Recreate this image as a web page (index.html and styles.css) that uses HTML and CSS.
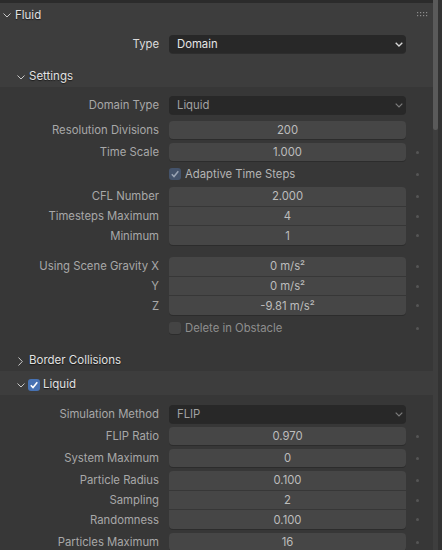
FILE: index.html
```html
<!DOCTYPE html>
<html>
<head>
<meta charset="utf-8">
<link rel="stylesheet" href="styles.css">
</head>
<body>
<div class="app">
  <div class="panel">
    <div class="topstrip"></div>
    <div class="hdr hdr-main">
      <svg class="chev" width="8" height="5" viewBox="0 0 8 5"><path d="M0.5 0.5 L4 4 L7.5 0.5" fill="none" stroke="#c8c8c8" stroke-width="1"/></svg>
      <span class="htitle">Fluid</span>
      <svg class="grip" width="12" height="5" viewBox="0 0 12 5">
        <rect x="0" y="0" width="1.2" height="1.2" fill="#8c8c8c"/><rect x="3" y="0" width="1.2" height="1.2" fill="#8c8c8c"/><rect x="6" y="0" width="1.2" height="1.2" fill="#8c8c8c"/><rect x="9" y="0" width="1.2" height="1.2" fill="#8c8c8c"/>
        <rect x="0" y="3" width="1.2" height="1.2" fill="#8c8c8c"/><rect x="3" y="3" width="1.2" height="1.2" fill="#8c8c8c"/><rect x="6" y="3" width="1.2" height="1.2" fill="#8c8c8c"/><rect x="9" y="3" width="1.2" height="1.2" fill="#8c8c8c"/>
      </svg>
    </div>
    <div class="body main-body">
      <div class="row">
        <div class="label bright">Type</div>
        <div class="menu"><span class="mtext bright">Domain</span><svg class="mchev" width="8" height="5" viewBox="0 0 8 5"><path d="M0.7 0.7 L4 4 L7.3 0.7" fill="none" stroke="#d8d8d8" stroke-width="1.3"/></svg></div>
        <div class="decor"></div>
      </div>
    </div>

    <div class="hdr hdr-sub">
      <svg class="chev" width="8" height="5" viewBox="0 0 8 5"><path d="M0.5 0.5 L4 4 L7.5 0.5" fill="none" stroke="#c8c8c8" stroke-width="1"/></svg>
      <span class="htitle">Settings</span>
    </div>
    <div class="body sub-body settings">
      <div class="row">
        <div class="label">Domain Type</div>
        <div class="menu"><span class="mtext">Liquid</span><svg class="mchev" width="8" height="5" viewBox="0 0 8 5"><path d="M0.7 0.7 L4 4 L7.3 0.7" fill="none" stroke="#7c7c7c" stroke-width="1.2"/></svg></div>
        <div class="decor"></div>
      </div>
      <div class="row m7">
        <div class="label">Resolution Divisions</div>
        <div class="num">200</div>
        <div class="decor"></div>
      </div>
      <div class="row m4">
        <div class="label">Time Scale</div>
        <div class="num">1.000</div>
        <div class="decor"><span class="dot"></span></div>
      </div>
      <div class="row m4">
        <div class="label"></div>
        <div class="check-row"><span class="cb cb-dim"><svg width="12" height="12" viewBox="0 0 12 12"><path d="M2.8 6.2 L5 8.5 L9.3 3.3" fill="none" stroke="#9aa4b4" stroke-width="1.5"/></svg></span><span class="ctext">Adaptive Time Steps</span></div>
        <div class="decor"><span class="dot"></span></div>
      </div>
      <div class="group m4">
        <div class="row grow">
          <div class="label">CFL Number</div>
          <div class="num g-first">2.000</div>
          <div class="decor"><span class="dot"></span></div>
        </div>
        <div class="row grow">
          <div class="label">Timesteps Maximum</div>
          <div class="num g-mid">4</div>
          <div class="decor"><span class="dot"></span></div>
        </div>
        <div class="row grow">
          <div class="label">Minimum</div>
          <div class="num g-last">1</div>
          <div class="decor"><span class="dot"></span></div>
        </div>
      </div>
      <div class="group m12">
        <div class="row grow">
          <div class="label">Using Scene Gravity X</div>
          <div class="num g-first">0 m/s²</div>
          <div class="decor"><span class="dot"></span></div>
        </div>
        <div class="row grow">
          <div class="label">Y</div>
          <div class="num g-mid">0 m/s²</div>
          <div class="decor"><span class="dot"></span></div>
        </div>
        <div class="row grow">
          <div class="label">Z</div>
          <div class="num g-last">-9.81 m/s²</div>
          <div class="decor"><span class="dot"></span></div>
        </div>
      </div>
      <div class="row m4">
        <div class="label"></div>
        <div class="check-row"><span class="cb cb-off"></span><span class="ctext dimmer">Delete in Obstacle</span></div>
        <div class="decor"><span class="dot"></span></div>
      </div>
    </div>

    <div class="hdr hdr-sub hdr-flat">
      <svg class="chev-r" width="5" height="9" viewBox="0 0 5 9"><path d="M0.5 0.5 L4.3 4.5 L0.5 8.5" fill="none" stroke="#c8c8c8" stroke-width="1"/></svg>
      <span class="htitle">Border Collisions</span>
    </div>
    <div class="hdr hdr-sub hdr-liquid">
      <svg class="chev" width="8" height="5" viewBox="0 0 8 5"><path d="M0.5 0.5 L4 4 L7.5 0.5" fill="none" stroke="#c8c8c8" stroke-width="1"/></svg>
      <span class="cb cb-on"><svg width="12" height="12" viewBox="0 0 12 12"><path d="M2.8 6.2 L5 8.5 L9.3 3.3" fill="none" stroke="#ffffff" stroke-width="1.6"/></svg></span>
      <span class="htitle">Liquid</span>
    </div>
    <div class="body sub-body liquid">
      <div class="row">
        <div class="label">Simulation Method</div>
        <div class="menu"><span class="mtext">FLIP</span><svg class="mchev" width="8" height="5" viewBox="0 0 8 5"><path d="M0.7 0.7 L4 4 L7.3 0.7" fill="none" stroke="#7c7c7c" stroke-width="1.2"/></svg></div>
        <div class="decor"></div>
      </div>
      <div class="row m4">
        <div class="label">FLIP Ratio</div>
        <div class="num">0.970</div>
        <div class="decor"><span class="dot"></span></div>
      </div>
      <div class="row m4">
        <div class="label">System Maximum</div>
        <div class="num">0</div>
        <div class="decor"><span class="dot"></span></div>
      </div>
      <div class="group m4">
        <div class="row grow">
          <div class="label">Particle Radius</div>
          <div class="num g-first">0.100</div>
          <div class="decor"><span class="dot"></span></div>
        </div>
        <div class="row grow">
          <div class="label">Sampling</div>
          <div class="num g-mid">2</div>
          <div class="decor"><span class="dot"></span></div>
        </div>
        <div class="row grow">
          <div class="label">Randomness</div>
          <div class="num g-last">0.100</div>
          <div class="decor"><span class="dot"></span></div>
        </div>
      </div>
      <div class="row m4">
        <div class="label">Particles Maximum</div>
        <div class="num">16</div>
        <div class="decor"><span class="dot"></span></div>
      </div>
    </div>
  </div>
  <div class="scroll">
    <div class="track"><div class="thumb"></div></div>
  </div>
</div>
</body>
</html>
```

FILE: styles.css
```css
* { box-sizing: border-box; }
html, body {
  margin: 0;
  padding: 0;
  background: #303030;
  width: 442px;
  height: 550px;
  overflow: hidden;
}
body {
  font-family: Inter, "Noto Sans", "DejaVu Sans", sans-serif;
  font-size: 11.3px;
  color: #a8a8a8;
}
.app {
  display: flex;
  width: 442px;
  height: 550px;
}
.panel {
  width: 433px;
  flex: none;
  background: #373737;
}
.topstrip {
  height: 3px;
  background: #2b2b2b;
}
.hdr {
  display: flex;
  align-items: center;
  background: #3d3d3d;
  color: #e2e2e2;
  text-shadow: 0 1px 1px rgba(0, 0, 0, 0.6);
}
.htitle { line-height: 1; }
.hdr-main {
  height: 23px;
  padding-left: 3px;
  padding-top: 2px;
  gap: 4px;
  font-size: 11.5px;
}
.hdr-main .grip {
  margin-left: auto;
  margin-right: 4px;
  margin-top: -2px;
}
.hdr-sub {
  height: 24px;
  padding-left: 17px;
  padding-top: 4px;
  gap: 4px;
  font-size: 11.5px;
}
.hdr-flat { background: #373737; }
.hdr-flat .chev-r { margin-left: 1px; margin-right: 2px; }
.hdr-liquid { gap: 3px; }

.body { display: flex; flex-direction: column; }
.main-body {
  background: #3d3d3d;
  padding: 9px 0 10px;
}
.sub-body { background: #373737; }
.settings { padding: 9px 0 10px; }
.liquid { padding: 10px 0 0; }

.row {
  display: grid;
  grid-template-columns: 159px 237px 1fr;
  column-gap: 10px;
  height: 18px;
  align-items: center;
}
.m4 { margin-top: 4px; }
.m7 { margin-top: 7px; }
.m12 { margin-top: 12px; }

.label {
  text-align: right;
  white-space: nowrap;
  color: #a8a8a8;
}
.label.bright { color: #dcdcdc; }

.menu {
  height: 18px;
  background: #282828;
  border-radius: 4px;
  display: flex;
  align-items: center;
  padding: 0 2px 0 8px;
  box-shadow: 0 1px 0 rgba(0, 0, 0, 0.25);
}
.mtext { color: #a2a2a2; }
.mtext.bright { color: #e6e6e6; }
.mchev { margin-left: auto; margin-right: 1px; }

.num {
  height: 18px;
  background: #464646;
  border-radius: 4px;
  display: flex;
  align-items: center;
  justify-content: center;
  color: #bdbdbd;
  box-shadow: 0 1px 0 rgba(0, 0, 0, 0.2);
}

.group {
  display: flex;
  flex-direction: column;
  gap: 1px;
  height: 58px;
}
.group .row.grow {
  height: auto;
  flex: 1;
  align-items: stretch;
}
.group .row.grow .label {
  display: flex;
  align-items: center;
  justify-content: flex-end;
}
.group .row.grow .decor { align-self: center; }
.group .num { height: auto; box-shadow: none; }
.num.g-first { border-radius: 4px 4px 0 0; }
.num.g-mid { border-radius: 0; }
.num.g-last { border-radius: 0 0 4px 4px; box-shadow: 0 1px 0 rgba(0, 0, 0, 0.2); }

.decor {
  display: flex;
  align-items: center;
  height: 18px;
}
.dot {
  width: 3px;
  height: 3px;
  border-radius: 50%;
  background: #555555;
}

.check-row {
  display: flex;
  align-items: center;
  gap: 4px;
  height: 18px;
}
.cb {
  width: 12px;
  height: 12px;
  border-radius: 3px;
  display: inline-flex;
  flex: none;
}
.cb-dim { background: #44536b; }
.cb-off { background: #444444; box-shadow: 0 1px 0 rgba(0, 0, 0, 0.2); }
.cb-on { background: #4772b3; }
.ctext { color: #b4b4b4; }
.ctext.dimmer { color: #8e8e8e; }

.scroll {
  flex: 1;
  background: #333333;
  display: flex;
}
.track {
  width: 5px;
  background: #3e3e3e;
  height: 550px;
}
.thumb {
  width: 5px;
  height: 130px;
  background: #5a5a5a;
  border-radius: 0 0 3px 3px;
}
```
